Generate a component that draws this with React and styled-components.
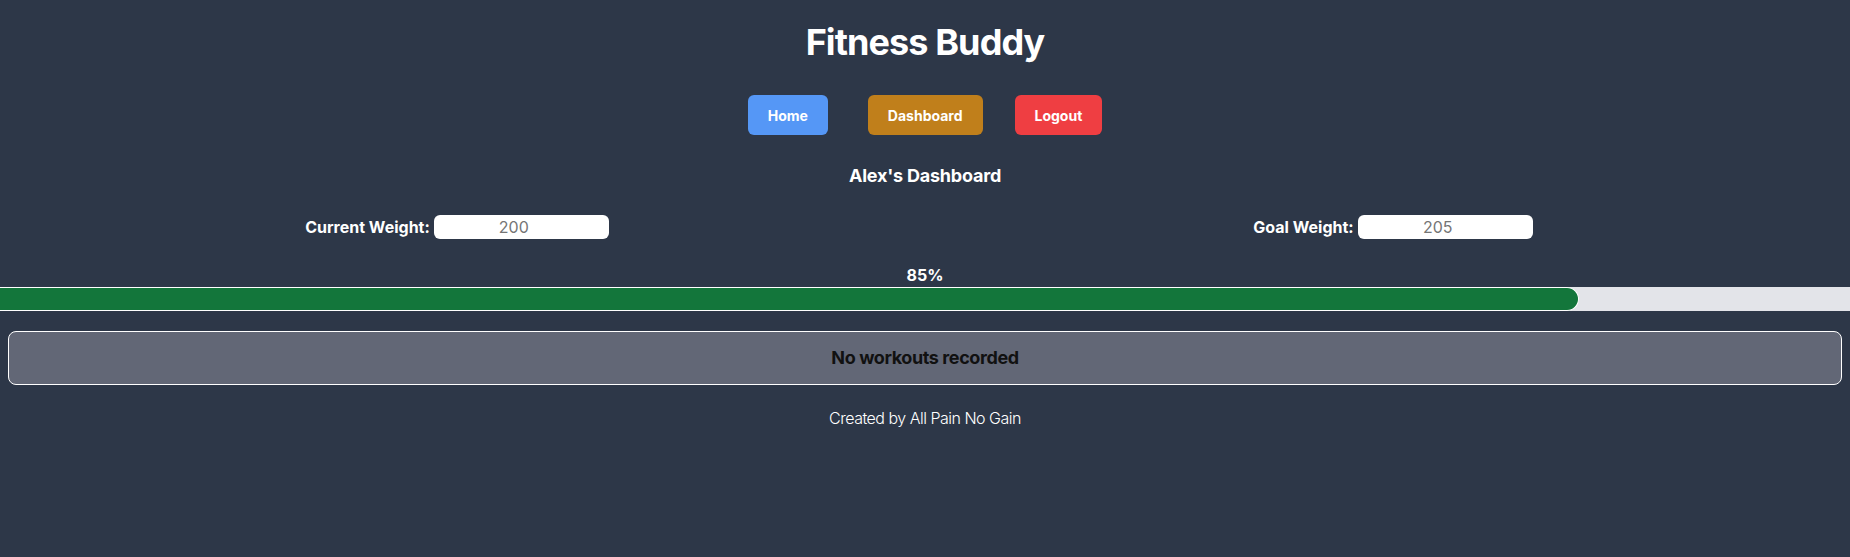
import React from "react";
import styled, { createGlobalStyle } from "styled-components";

const GlobalStyle = createGlobalStyle`
	body {
		margin: 0;
		background: #2d3748;
		font-family: Inter, "Noto Sans", sans-serif;
		color: #fff;
	}
`;

export default function App() {
	const current = 200;
	const goal = 205;
	const progress = 85;

	return (
		<Page>
			<GlobalStyle />
			<Title>Fitness Buddy</Title>
			<Nav>
				<NavButton $bg="#5597f6" $right="40px">Home</NavButton>
				<NavButton $bg="#c07f1b" $right="32px">Dashboard</NavButton>
				<NavButton $bg="#ef3e42">Logout</NavButton>
			</Nav>
			<Heading>Alex's Dashboard</Heading>
			<WeightRow>
				<Field>
					<Label>Current Weight:</Label>
					<Input placeholder={String(current)} />
				</Field>
				<Field>
					<Label>Goal Weight:</Label>
					<Input placeholder={String(goal)} />
				</Field>
			</WeightRow>
			<Percent>{progress}%</Percent>
			<Track>
				<Fill style={{ width: `calc(${progress}% + 6px)` }} />
			</Track>
			<Workouts>No workouts recorded</Workouts>
			<Footer>Created by All Pain No Gain</Footer>
		</Page>
	);
}

const Page = styled.div`
	display: flex;
	flex-direction: column;
	align-items: center;
	padding-top: 22px;
	min-height: 557px;
	box-sizing: border-box;
`;
const Title = styled.h1`
	margin: 0;
	font-size: 36px;
	line-height: 40px;
	font-weight: 700;
	letter-spacing: -0.9px;
`;
const Nav = styled.nav`
	display: flex;
	margin-top: 33px;
`;
const NavButton = styled.button`
	height: 40px;
	padding: 0 20px;
	margin-right: ${(p) => p.$right || "0"};
	border: none;
	border-radius: 6px;
	background: ${(p) => p.$bg};
	color: #fff;
	font-family: inherit;
	font-size: 14px;
	font-weight: 700;
	cursor: pointer;
`;
const Heading = styled.h2`
	margin: 29px 0 0;
	font-size: 18px;
	line-height: 24px;
	font-weight: 700;
	letter-spacing: -0.2px;
`;
const WeightRow = styled.div`
	display: grid;
	grid-template-columns: 1fr 1fr;
	column-gap: 22px;
	width: 100%;
	margin-top: 27px;
`;
const Field = styled.div`
	display: flex;
	justify-content: center;
	align-items: center;
	gap: 4px;
`;
const Label = styled.label`
	font-size: 16px;
	line-height: 24px;
	font-weight: 700;
`;
const Input = styled.input`
	width: 175px;
	height: 24px;
	box-sizing: border-box;
	border: none;
	border-radius: 6px;
	background: #fff;
	font-family: inherit;
	font-size: 16px;
	text-align: center;
	padding: 0 15px 0 0;

	::placeholder {
		color: #8e95a5;
	}
`;
const Percent = styled.div`
	margin-top: 24px;
	font-size: 16px;
	line-height: 24px;
	font-weight: 700;
`;
const Track = styled.div`
	width: 100%;
	height: 24px;
	background: #e3e4e9;
	overflow: hidden;
`;
const Fill = styled.div`
	height: 100%;
	box-sizing: border-box;
	background: #13763b;
	border: 1px solid #fff;
	border-left: none;
	border-radius: 0 12px 12px 0;
`;
const Workouts = styled.div`
	align-self: stretch;
	margin: 20px 8px 0;
	padding: 12px;
	border: 1px solid #fff;
	border-radius: 8px;
	background: #626776;
	color: #111;
	text-align: center;
	font-size: 18px;
	line-height: 28px;
	font-weight: 700;
	letter-spacing: -0.4px;
`;
const Footer = styled.footer`
	margin-top: 21px;
	font-size: 16px;
	line-height: 24px;
	font-weight: 300;
	letter-spacing: -0.5px;
`;
